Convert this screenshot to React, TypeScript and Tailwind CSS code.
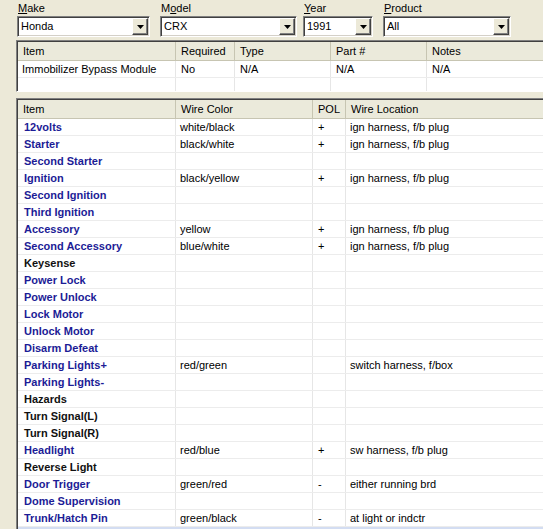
import React from 'react';

type WireRow = {
  name: string;
  blue: boolean;
  color?: string;
  pol?: string;
  loc?: string;
};

const wires: WireRow[] = [
  { name: '12volts', blue: true, color: 'white/black', pol: '+', loc: 'ign harness, f/b plug' },
  { name: 'Starter', blue: true, color: 'black/white', pol: '+', loc: 'ign harness, f/b plug' },
  { name: 'Second Starter', blue: true },
  { name: 'Ignition', blue: true, color: 'black/yellow', pol: '+', loc: 'ign harness, f/b plug' },
  { name: 'Second Ignition', blue: true },
  { name: 'Third Ignition', blue: true },
  { name: 'Accessory', blue: true, color: 'yellow', pol: '+', loc: 'ign harness, f/b plug' },
  { name: 'Second Accessory', blue: true, color: 'blue/white', pol: '+', loc: 'ign harness, f/b plug' },
  { name: 'Keysense', blue: false },
  { name: 'Power Lock', blue: true },
  { name: 'Power Unlock', blue: true },
  { name: 'Lock Motor', blue: true },
  { name: 'Unlock Motor', blue: true },
  { name: 'Disarm Defeat', blue: true },
  { name: 'Parking Lights+', blue: true, color: 'red/green', loc: 'switch harness, f/box' },
  { name: 'Parking Lights-', blue: true },
  { name: 'Hazards', blue: false },
  { name: 'Turn Signal(L)', blue: false },
  { name: 'Turn Signal(R)', blue: false },
  { name: 'Headlight', blue: true, color: 'red/blue', pol: '+', loc: 'sw harness, f/b plug' },
  { name: 'Reverse Light', blue: false },
  { name: 'Door Trigger', blue: true, color: 'green/red', pol: '-', loc: 'either running brd' },
  { name: 'Dome Supervision', blue: true },
  { name: 'Trunk/Hatch Pin', blue: true, color: 'green/black', pol: '-', loc: 'at light or indctr' },
];

function Combo({ label, ul, value, width }: { label: string; ul: number; value: string; width: string }) {
  return (
    <div className={`flex flex-col ${width}`}>
      <div className="h-[15px] leading-[14px] pl-[1px]">
        {label.slice(0, ul)}
        <span className="underline">{label[ul]}</span>
        {label.slice(ul + 1)}
      </div>
      <div className="h-[21px] flex items-center bg-white border border-t-[#808080] border-l-[#808080] border-b-white border-r-white shadow-[inset_1px_1px_0_#404040,inset_-1px_-1px_0_#d4d0c8]">
        <div className="flex-1 pl-[3px] leading-[17px]">{value}</div>
        <div className="w-[16px] h-[17px] mr-[1px] bg-[#ece9d8] border border-t-white border-l-white border-b-[#404040] border-r-[#404040] shadow-[inset_-1px_-1px_0_#808080] flex items-center justify-center">
          <svg width="7" height="4" viewBox="0 0 7 4">
            <path d="M0 0h7L3.5 4z" fill="#000" />
          </svg>
        </div>
      </div>
    </div>
  );
}

function HeadCell({ text, w }: { text: string; w: string }) {
  return (
    <div className={`${w} shrink-0 h-full px-[5px] flex items-center border-r border-[#c7c5b2] whitespace-nowrap`}>
      {text}
    </div>
  );
}

function Cell({ text, w, cls = '' }: { text?: string; w: string; cls?: string }) {
  return (
    <div className={`${w} shrink-0 h-full px-[5px] flex items-center border-r border-[#e6e6e6] whitespace-nowrap ${cls}`}>
      {text}
    </div>
  );
}

export default function App() {
  return (
    <div
      className="w-[543px] h-[529px] overflow-hidden bg-[#ece9d8] text-[11px] text-black"
      style={{ fontFamily: '"Liberation Sans", Arial, sans-serif' }}
    >
      {/* selectors */}
      <div className="flex pl-[17px] pt-[1px] h-[40px]">
        <Combo label="Make" ul={0} value="Honda" width="w-[133px]" />
        <div className="w-[10px]" />
        <Combo label="Model" ul={1} value="CRX" width="w-[137px]" />
        <div className="w-[6px]" />
        <Combo label="Year" ul={0} value="1991" width="w-[70px]" />
        <div className="w-[10px]" />
        <Combo label="Product" ul={0} value="All" width="w-[128px]" />
      </div>

      {/* product grid */}
      <div className="ml-[16px] w-[560px] h-[52px] bg-white border border-t-[#808080] border-l-[#808080] border-r-white border-b-white shadow-[inset_1px_1px_0_#404040] pt-[1px] pl-[1px] overflow-hidden">
        <div className="flex h-[19px] bg-[#ebeadb] border-b border-[#c7c5b2]">
          <HeadCell text="Item" w="w-[158px]" />
          <HeadCell text="Required" w="w-[59px]" />
          <HeadCell text="Type" w="w-[96px]" />
          <HeadCell text="Part #" w="w-[96px]" />
          <HeadCell text="Notes" w="w-[200px]" />
        </div>
        <div className="flex h-[17px] border-b border-[#ececec]">
          <Cell text="Immobilizer Bypass Module" w="w-[158px]" cls="pl-[4px]" />
          <Cell text="No" w="w-[59px]" />
          <Cell text="N/A" w="w-[96px]" />
          <Cell text="N/A" w="w-[96px]" />
          <Cell text="N/A" w="w-[200px]" />
        </div>
        <div className="flex h-[17px]">
          <Cell w="w-[158px]" />
          <Cell w="w-[59px]" />
          <Cell w="w-[96px]" />
          <Cell w="w-[96px]" />
          <Cell w="w-[200px]" />
        </div>
      </div>

      {/* wire grid */}
      <div className="ml-[16px] mt-[6px] w-[560px] h-[440px] bg-white border border-t-[#808080] border-l-[#808080] border-r-white border-b-white shadow-[inset_1px_1px_0_#404040] pt-[1px] pl-[1px] overflow-hidden">
        <div className="flex h-[19px] bg-[#ebeadb] border-b border-[#c7c5b2]">
          <HeadCell text="Item" w="w-[158px]" />
          <HeadCell text="Wire Color" w="w-[137px]" />
          <HeadCell text="POL" w="w-[33px]" />
          <HeadCell text="Wire Location" w="w-[230px]" />
        </div>
        {wires.map((r) => (
          <div key={r.name} className="flex h-[17px] border-b border-[#ececec]">
            <Cell
              text={r.name}
              w="w-[158px]"
              cls={`font-bold pl-[6px] ${r.blue ? 'text-[#1c1c96]' : 'text-[#111]'}`}
            />
            <Cell text={r.color} w="w-[137px]" cls="pl-[4px]" />
            <Cell text={r.pol} w="w-[33px]" />
            <Cell text={r.loc} w="w-[230px]" cls="pl-[4px]" />
          </div>
        ))}
        <div className="h-[17px] bg-[#d3ddf2]" />
      </div>
    </div>
  );
}
